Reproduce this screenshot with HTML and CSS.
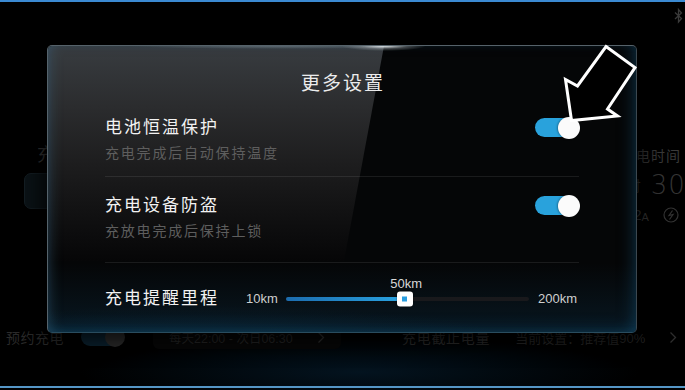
FILE: index.html
```html
<!DOCTYPE html>
<html lang="zh-CN">
<head>
<meta charset="utf-8">
<title>更多设置</title>
<link rel="stylesheet" href="styles.css">
</head>
<body>
<div class="screen">
  <div class="topline"></div>
  <div class="statusbar">
    <svg class="bt-icon" width="9" height="16" viewBox="0 0 9 16"><polyline points="1,4.5 7.5,10.5 4.5,14 4.5,1.5 7.5,5 1,11" fill="none" stroke="#3a3a3a" stroke-width="1.3"/></svg>
  </div>
  <div class="main">
    <section class="panel-left">
      <div class="panel-title">充电功率</div>
      <div class="power-box"></div>
    </section>
    <section class="panel-right">
      <div class="eta-label">预计充电时间</div>
      <div class="eta"><span class="eta-pre">约1小时</span><span class="eta-num">30</span></div>
      <div class="current"><span class="cur-label">电流</span><span class="cur-num">32</span><span class="cur-unit">A</span>
        <svg class="bolt" width="16" height="16" viewBox="0 0 16 16"><circle cx="8" cy="8" r="7" fill="none" stroke="#333" stroke-width="1.2"/><polyline points="9.5,3.5 6,8.5 10,7.5 6.5,12.5" fill="none" stroke="#333" stroke-width="1.2"/></svg>
      </div>
    </section>
  </div>
  <div class="bottom-row">
    <span class="bt-label">预约充电</span>
    <span class="mini-toggle"><span class="mini-knob"></span></span>
    <div class="sched">
      <span class="sched-text">每天22:00 - 次日06:30</span>
      <svg class="chev" width="8" height="13" viewBox="0 0 8 13"><polyline points="1.5,1.5 6.5,6.5 1.5,11.5" fill="none" stroke="#2e2e2e" stroke-width="1.3"/></svg>
    </div>
    <span class="limit-label">充电截止电量</span>
    <span class="limit-value">当前设置：推荐值90%</span>
    <svg class="chev chev-end" width="8" height="13" viewBox="0 0 8 13"><polyline points="1.5,1.5 6.5,6.5 1.5,11.5" fill="none" stroke="#2e2e2e" stroke-width="1.3"/></svg>
  </div>
  <div class="spacer"></div>
  <div class="bottomline"></div>

  <div class="modal">
    <div class="modal-title">更多设置</div>
    <div class="setting-row">
      <div class="setting-text">
        <div class="setting-name">电池恒温保护</div>
        <div class="setting-desc">充电完成后自动保持温度</div>
      </div>
      <div class="toggle"><span class="knob"></span></div>
    </div>
    <div class="setting-row second">
      <div class="setting-text">
        <div class="setting-name">充电设备防盗</div>
        <div class="setting-desc">充放电完成后保持上锁</div>
      </div>
      <div class="toggle"><span class="knob"></span></div>
    </div>
    <div class="slider-row">
      <div class="setting-name">充电提醒里程</div>
      <span class="range-label range-min">10km</span>
      <div class="slider">
        <div class="slider-fill" style="width:49%"></div>
        <div class="slider-thumb" style="left:49%"><span class="slider-value">50km</span><span class="thumb-dot"></span></div>
      </div>
      <span class="range-label range-max">200km</span>
    </div>
  </div>

  <svg class="arrow" width="685" height="390" viewBox="0 0 685 390">
    <polygon points="606,46.5 635,67.5 607.5,109 617.5,116 571.5,120.5 565.5,79.5 577.5,86" fill="#000" stroke="#fff" stroke-width="3" stroke-linejoin="miter"/>
  </svg>
</div>
</body>
</html>
```

FILE: styles.css
```css
html, body {
  margin: 0;
  padding: 0;
  background: #000;
}

body {
  width: 685px;
  height: 390px;
  overflow: hidden;
  font-family: "Noto Sans CJK SC", "Noto Sans", sans-serif;
}

.screen {
  position: relative;
  width: 685px;
  height: 390px;
  display: flex;
  flex-direction: column;
  background:
    radial-gradient(ellipse 280px 36px at 360px 372px, rgba(8, 48, 78, 0.4), transparent),
    #000;
}

.topline {
  height: 2px;
  background: #3b8ad2;
  flex: none;
}

.statusbar {
  height: 28px;
  flex: none;
  display: flex;
  justify-content: flex-end;
  align-items: flex-start;
}

.bt-icon {
  margin-top: 6px;
  margin-right: 2px;
}

/* background dashboard */
.main {
  height: 296px;
  flex: none;
  display: flex;
  align-items: flex-start;
}

.panel-left {
  margin-left: 24px;
  padding-top: 111px;
  width: 300px;
}

.panel-title {
  padding-left: 13px;
  font-size: 18px;
  line-height: 24px;
  color: #3a3a3a;
}

.power-box {
  margin-top: 8px;
  height: 34px;
  border-radius: 7px;
  background: #0b1317;
  border: 1px solid #141e24;
}

.panel-right {
  margin-left: auto;
  width: 94px;
  flex: none;
  padding-top: 115px;
  white-space: nowrap;
  color: #3a3a3a;
}

.eta-label {
  font-size: 14px;
  letter-spacing: 1px;
  line-height: 20px;
}

.eta {
  margin-top: 6px;
  height: 28px;
  display: flex;
  align-items: center;
}

.eta-pre {
  font-size: 14px;
}

.eta-num {
  margin-left: 10px;
  font-family: "DejaVu Sans", sans-serif;
  font-weight: 200;
  font-size: 26px;
  letter-spacing: 1px;
  color: #363636;
}

.current {
  margin-top: 7px;
  height: 18px;
  display: flex;
  align-items: center;
  font-size: 13px;
}

.cur-num {
  margin-left: 9px;
  font-family: "Liberation Sans", sans-serif;
  font-size: 14px;
}

.cur-unit {
  font-family: "Liberation Sans", sans-serif;
  font-size: 11px;
  margin-top: 3px;
}

.bolt {
  margin-left: 14px;
}

.bottom-row {
  height: 22px;
  flex: none;
  display: flex;
  align-items: center;
  white-space: nowrap;
  color: #2b2b2b;
}

.bt-label {
  margin-left: 6px;
  font-size: 14px;
  letter-spacing: 0.5px;
}

.mini-toggle {
  margin-left: 17px;
  width: 43px;
  height: 18px;
  border-radius: 9px;
  background: #0b2230;
  display: flex;
  justify-content: flex-end;
  align-items: center;
}

.mini-knob {
  width: 20px;
  height: 20px;
  border-radius: 50%;
  background: #2c2c2c;
  margin-right: -1px;
}

.sched {
  margin-left: 29px;
  width: 188px;
  height: 23px;
  box-sizing: border-box;
  padding: 0 16px;
  border-radius: 6px;
  background: #070707;
  display: flex;
  align-items: center;
  justify-content: space-between;
}

.sched-text {
  font-family: "Liberation Sans", "Noto Sans CJK SC", sans-serif;
  font-size: 12.5px;
  color: #252525;
}

.limit-label {
  margin-left: 61px;
  font-size: 14px;
  letter-spacing: 0.7px;
}

.limit-value {
  margin-left: 25px;
  font-family: "Liberation Sans", "Noto Sans CJK SC", sans-serif;
  font-size: 13px;
  color: #262626;
}

.chev-end {
  margin-left: 24px;
}

.spacer {
  flex: 1;
}

.bottomline {
  height: 2px;
  flex: none;
  background: #5596c6;
  margin-bottom: 2px;
}

/* modal */
.modal {
  position: absolute;
  left: 47px;
  top: 45px;
  width: 590px;
  height: 288px;
  box-sizing: border-box;
  padding: 24px 57px 0;
  border: 1px solid #3c4850;
  border-top-color: #56626a;
  border-left-color: #55636c;
  border-bottom-color: #2a4c5e;
  border-radius: 5px;
  background:
    radial-gradient(ellipse 300px 30px at 150px 290px, rgba(16, 60, 86, 0.3), transparent),
    linear-gradient(180deg, #050607 0%, #050607 76%, #081721 100%);
  box-shadow: 0 0 22px 8px rgba(0, 0, 0, 0.75);
}

.modal::before {
  content: "";
  position: absolute;
  left: 0;
  top: 0;
  width: 340px;
  height: 215px;
  border-top-left-radius: 4px;
  clip-path: polygon(0 0, 336px 0, 296px 215px, 0 215px);
  background: linear-gradient(180deg, #383c40 0%, #2b2c2e 28%, #1d1d1e 55%, #0f0f10 82%, #060607 100%);
}

.modal::after {
  content: "";
  position: absolute;
  inset: 0;
  border-radius: 4px;
  background:
    radial-gradient(ellipse 42px 5px at 336px 0px, rgba(255, 255, 255, 0.95), rgba(255, 255, 255, 0.25) 55%, transparent),
    radial-gradient(ellipse 150px 3px at 230px 0px, rgba(180, 195, 205, 0.35), transparent);
  box-shadow:
    inset 9px 0 14px -8px rgba(70, 120, 150, 0.4),
    inset -10px 0 16px -8px rgba(20, 80, 115, 0.5),
    inset 0 -10px 16px -8px rgba(20, 80, 115, 0.4);
  pointer-events: none;
}

.modal-title,
.setting-row,
.slider-row {
  position: relative;
  z-index: 2;
}

.modal-title {
  text-align: center;
  padding-left: 2px;
  font-size: 19px;
  line-height: 24px;
  letter-spacing: 2px;
  color: #ececec;
}

.setting-row {
  display: flex;
  align-items: flex-start;
  justify-content: space-between;
  padding: 21px 0 15px;
  border-bottom: 1px solid rgba(255, 255, 255, 0.085);
}

.setting-row.second {
  padding: 16px 0 23px;
}

.setting-name {
  font-size: 17px;
  line-height: 22px;
  letter-spacing: 2px;
  color: #f2f2f2;
  white-space: nowrap;
}

.setting-desc {
  margin-top: 6px;
  font-size: 14px;
  line-height: 18px;
  letter-spacing: 1.8px;
  color: #5e5e5e;
}

.toggle {
  margin-top: 3px;
  width: 44px;
  height: 19px;
  border-radius: 10px;
  background: #29a2dc;
  display: flex;
  justify-content: flex-end;
  align-items: center;
}

.knob {
  width: 22px;
  height: 22px;
  flex: none;
  border-radius: 50%;
  background: #fbfbfb;
  margin-right: -1px;
  box-shadow: -1px 0 2px rgba(0, 0, 0, 0.3);
}

.slider-row {
  display: flex;
  align-items: center;
  padding-top: 23px;
  height: 22px;
}

.range-label {
  font-family: "Liberation Sans", sans-serif;
  font-size: 13px;
  color: #cfcfcf;
  margin-top: 2px;
}

.range-min {
  margin-left: 27px;
}

.slider {
  position: relative;
  flex: 1;
  height: 4px;
  margin: 4px 9px 0 8px;
  border-radius: 2px;
  background: #19191c;
}

.slider-fill {
  height: 100%;
  border-radius: 2px;
  background: linear-gradient(90deg, #1c6cae, #2aa4e2);
}

.slider-thumb {
  position: absolute;
  top: 50%;
  width: 16px;
  height: 15px;
  transform: translate(-50%, -50%);
  border-radius: 3px;
  background: #fff;
  display: flex;
  align-items: center;
  justify-content: center;
  box-shadow: 0 0 2px rgba(0, 0, 0, 0.6);
}

.thumb-dot {
  width: 5px;
  height: 5px;
  background: #2a9ee0;
}

.slider-value {
  position: absolute;
  bottom: calc(100% + 1px);
  left: 50%;
  transform: translateX(-46%);
  font-family: "Liberation Sans", sans-serif;
  font-size: 13px;
  line-height: 15px;
  color: #d8d8d8;
}

.range-max {
  margin-right: 2px;
}

.arrow {
  position: absolute;
  left: 0;
  top: 0;
  z-index: 5;
  pointer-events: none;
}
```
